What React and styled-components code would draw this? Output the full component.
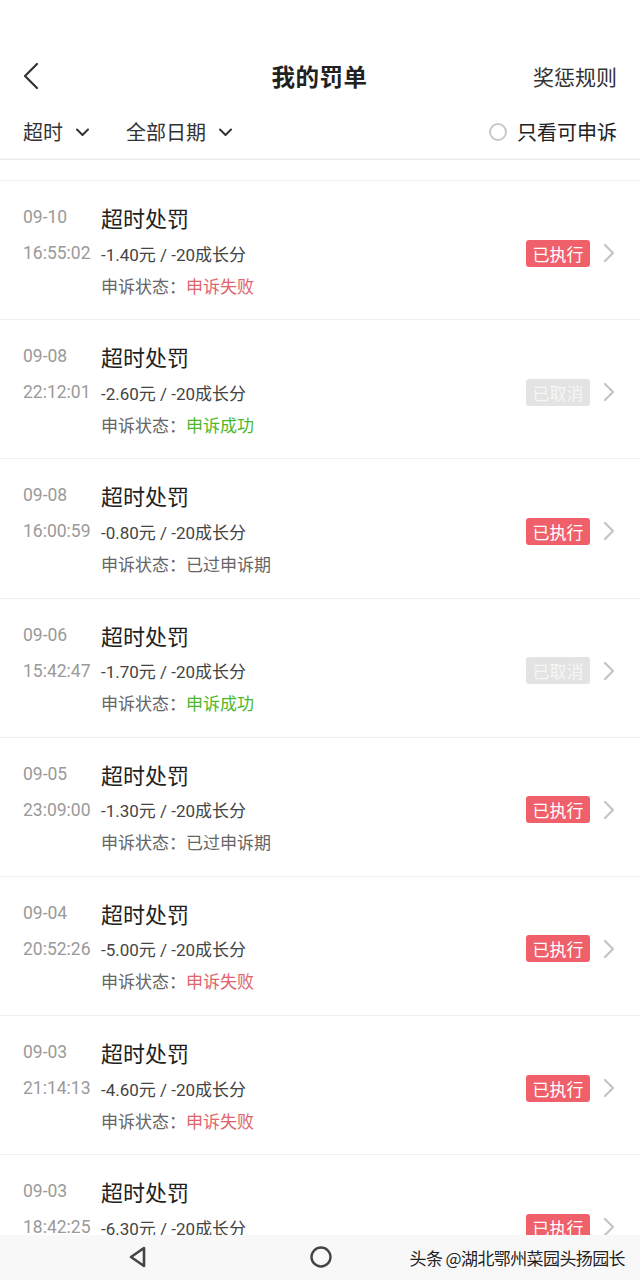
import React from "react";
import styled, { createGlobalStyle } from "styled-components";

const Global = createGlobalStyle`
  html, body { margin: 0; padding: 0; background: #fff; }
  body { font-family: Roboto, "Noto Sans CJK SC", sans-serif; }
  * { box-sizing: border-box; }
`;

const Page = styled.div`
  width: 640px;
  height: 1280px;
  display: flex;
  flex-direction: column;
  overflow: hidden;
  background: #fff;
`;

const StatusSpace = styled.div`
  height: 48px;
  flex-shrink: 0;
`;

const Header = styled.div`
  height: 56px;
  flex-shrink: 0;
  display: grid;
  grid-template-columns: 1fr auto 1fr;
  align-items: center;
  padding: 0 23px 0 22px;
`;

const BackBtn = styled.div`
  display: flex;
  align-items: center;
`;

const Title = styled.div`
  font-family: "Noto Sans CJK SC", sans-serif;
  font-size: 23.5px;
  font-weight: 700;
  color: #222;
  letter-spacing: 0.5px;
`;

const RuleLink = styled.div`
  justify-self: end;
  font-family: "Noto Sans CJK SC", sans-serif;
  font-size: 21px;
  color: #333;
`;

const FilterBar = styled.div`
  height: 56px;
  flex-shrink: 0;
  display: flex;
  align-items: center;
  padding: 0 23px;
  border-bottom: 1px solid #eee;
  box-shadow: 0 -5px 0 -4px #f4f4f4 inset;
`;

const FilterItem = styled.div`
  display: flex;
  align-items: center;
  gap: 12px;
  margin-right: ${(p) => p.$mr || 0}px;
  font-family: "Noto Sans CJK SC", sans-serif;
  font-size: 20px;
  color: #333;
`;

const Spacer = styled.div`
  flex: 1;
`;

const Radio = styled.span`
  width: 18px;
  height: 18px;
  border-radius: 50%;
  border: 2px solid #c8c8c8;
  display: inline-block;
`;

const CheckLabel = styled.div`
  display: flex;
  align-items: center;
  gap: 10px;
  font-family: "Noto Sans CJK SC", sans-serif;
  font-size: 20px;
  color: #222;
`;

const Gap = styled.div`
  height: 20px;
  flex-shrink: 0;
`;

const List = styled.div`
  flex: 1;
  overflow: hidden;
`;

const Item = styled.div`
  height: 139.2px;
  border-top: 1px solid #eee;
  display: grid;
  grid-template-columns: 78px 1fr auto auto;
  grid-template-rows: 38px 34px 30px;
  padding: 17px 25px 0 23px;
  align-items: center;
`;

const DateText = styled.div`
  font-family: Roboto, sans-serif;
  font-size: 17.5px;
  color: #9a9a9a;
  grid-column: 1;
`;

const ItemTitle = styled.div`
  font-family: "Noto Sans CJK SC", sans-serif;
  font-size: 22px;
  color: #222;
  grid-column: 2 / 5;
`;

const Amount = styled.div`
  font-family: Roboto, "Noto Sans CJK SC", sans-serif;
  font-size: 17px;
  color: #444;
  grid-column: 2;
`;

const Badge = styled.div`
  grid-column: 3;
  grid-row: 2;
  width: 64px;
  height: 27px;
  border-radius: 3px;
  background: ${(p) => (p.$done ? "#f0606a" : "#e3e3e3")};
  color: ${(p) => (p.$done ? "#fff" : "#f6f6f6")};
  font-family: "Noto Sans CJK SC", sans-serif;
  font-size: 17px;
  display: flex;
  align-items: center;
  justify-content: center;
`;

const Chevron = styled.div`
  grid-column: 4;
  grid-row: 2;
  margin-left: 13px;
  display: flex;
  align-items: center;
`;

const StatusLine = styled.div`
  grid-column: 2 / 5;
  grid-row: 3;
  font-family: "Noto Sans CJK SC", sans-serif;
  font-size: 17px;
  color: #666;
`;

const StatusValue = styled.span`
  color: ${(p) => (p.$kind === "fail" ? "#e0646c" : p.$kind === "ok" ? "#4cb82a" : "#666")};
`;

const NavBar = styled.div`
  height: 45px;
  flex-shrink: 0;
  background: #f8f8f8;
  display: flex;
  align-items: center;
  position: relative;
`;

const NavIcon = styled.div`
  position: absolute;
  left: ${(p) => p.$x}px;
  top: 10px;
`;

const Watermark = styled.div`
  margin-left: auto;
  margin-right: 15px;
  font-family: "Noto Sans CJK SC", sans-serif;
  font-size: 17px;
  color: #222;
  text-shadow: 0 0 2px #fff, 0 0 1px #fff;
  letter-spacing: -0.6px;
`;

const items = [
  ["09-10", "16:55:02", "-1.40", true, "申诉失败", "fail"],
  ["09-08", "22:12:01", "-2.60", false, "申诉成功", "ok"],
  ["09-08", "16:00:59", "-0.80", true, "已过申诉期", "none"],
  ["09-06", "15:42:47", "-1.70", false, "申诉成功", "ok"],
  ["09-05", "23:09:00", "-1.30", true, "已过申诉期", "none"],
  ["09-04", "20:52:26", "-5.00", true, "申诉失败", "fail"],
  ["09-03", "21:14:13", "-4.60", true, "申诉失败", "fail"],
  ["09-03", "18:42:25", "-6.30", true, "申诉失败", "fail"],
];

const Down = () => (
  <svg width="15" height="10" viewBox="0 0 15 10">
    <path d="M2 2.5 L7.5 8 L13 2.5" fill="none" stroke="#333" strokeWidth="2" strokeLinecap="round" strokeLinejoin="round" />
  </svg>
);

export default function App() {
  return (
    <Page>
      <Global />
      <StatusSpace />
      <Header>
        <BackBtn>
          <svg width="18" height="28" viewBox="0 0 18 28">
            <path d="M15 2 L3 14 L15 26" fill="none" stroke="#333" strokeWidth="2.2" strokeLinecap="round" strokeLinejoin="round" />
          </svg>
        </BackBtn>
        <Title>我的罚单</Title>
        <RuleLink>奖惩规则</RuleLink>
      </Header>
      <FilterBar>
        <FilterItem $mr={36}>超时<Down /></FilterItem>
        <FilterItem>全部日期<Down /></FilterItem>
        <Spacer />
        <CheckLabel><Radio />只看可申诉</CheckLabel>
      </FilterBar>
      <Gap />
      <List>
        {items.map(([d, t, amt, done, st, kind], i) => (
          <Item key={i}>
            <DateText>{d}</DateText>
            <ItemTitle>超时处罚</ItemTitle>
            <DateText>{t}</DateText>
            <Amount>{amt}元 / -20成长分</Amount>
            <Badge $done={done}>{done ? "已执行" : "已取消"}</Badge>
            <Chevron>
              <svg width="12" height="20" viewBox="0 0 12 20">
                <path d="M2 2 L10 10 L2 18" fill="none" stroke="#c4c4c4" strokeWidth="2.2" strokeLinecap="round" strokeLinejoin="round" />
              </svg>
            </Chevron>
            <StatusLine>
              申诉状态：<StatusValue $kind={kind}>{st}</StatusValue>
            </StatusLine>
          </Item>
        ))}
      </List>
      <NavBar>
        <NavIcon $x={128}>
          <svg width="20" height="24" viewBox="0 0 20 24">
            <path d="M16 3 L16 21 L3 12 Z" fill="none" stroke="#444" strokeWidth="2.6" strokeLinejoin="round" />
          </svg>
        </NavIcon>
        <NavIcon $x={309}>
          <svg width="24" height="24" viewBox="0 0 24 24">
            <circle cx="12" cy="12" r="9.5" fill="none" stroke="#444" strokeWidth="2.4" />
          </svg>
        </NavIcon>
        <Watermark>头条 @湖北鄂州菜园头扬园长</Watermark>
      </NavBar>
    </Page>
  );
}
